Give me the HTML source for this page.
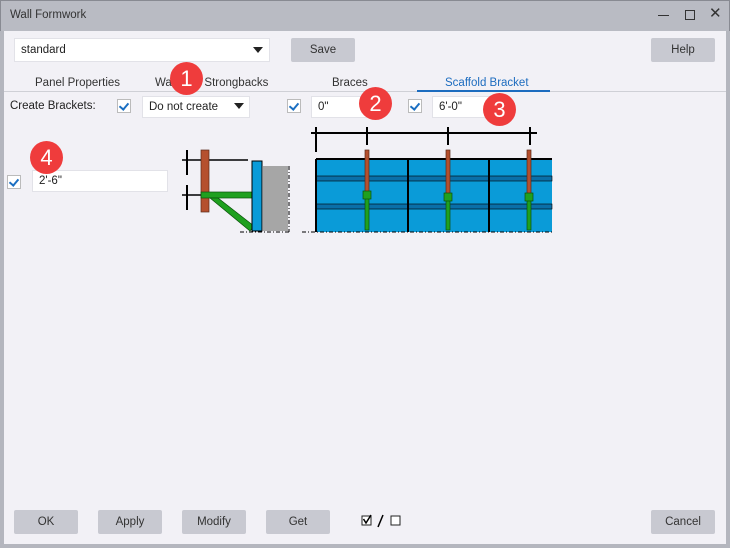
<!DOCTYPE html>
<html><head><style>
*{margin:0;padding:0;box-sizing:border-box}
body{width:730px;height:548px;background:#b4b6be;font-family:"Liberation Sans",sans-serif;font-size:11px;color:#222;position:relative;overflow:hidden}
.a{position:absolute}
#tb{left:0;top:0;width:730px;height:31px;background:#b9bbc3;border:1px solid #888a92;border-bottom:none}
#ct{left:4px;top:31px;width:722px;height:513px;background:#f2f1f6}
.btn{position:absolute;background:#c8c9d1;border-radius:2px;height:24px;text-align:center;line-height:24px;font-size:11.5px;color:#333}
.inp{position:absolute;background:#fff;border:1px solid #e2e2e8;height:22px;line-height:20px;padding-left:6px;font-size:11.5px}
.cb{position:absolute;width:14px;height:14px;background:#fff;border:1px solid #bbb}
.cb:after{content:"";position:absolute;left:3px;top:1px;width:4px;height:7px;border:solid #1b6fc2;border-width:0 2px 2px 0;transform:rotate(40deg)}
.tab{position:absolute;top:77px;font-size:11.5px;color:#333}
.num{position:absolute;width:33px;height:33px;border-radius:50%;background:#ef3c3c;color:#fff;font-size:22px;text-align:center;line-height:33px}
.tri{position:absolute;width:0;height:0;border-left:5px solid transparent;border-right:5px solid transparent;border-top:6px solid #222}
</style></head><body>
<div id="tb" class="a"></div>
<div class="a" style="left:10px;top:9px;font-size:11.5px;color:#333">Wall Formwork</div>
<div class="a" style="left:658px;top:15px;width:11px;height:1px;background:#333"></div>
<div class="a" style="left:685px;top:10px;width:10px;height:10px;border:1px solid #333"></div>
<div class="a" style="left:709px;top:4px;font-size:15px;color:#333">✕</div>
<div id="ct" class="a"></div>
<div class="inp" style="left:14px;top:38px;width:256px;height:24px;line-height:22px">standard</div>
<div class="tri" style="left:253px;top:47px"></div>
<div class="btn" style="left:291px;top:38px;width:64px">Save</div>
<div class="btn" style="left:651px;top:38px;width:64px">Help</div>
<div class="tab" style="left:35px">Panel Properties</div>
<div class="tab" style="left:155px">Walers &amp; Strongbacks</div>
<div class="tab" style="left:332px">Braces</div>
<div class="tab" style="left:445px;color:#1c6cbf">Scaffold Bracket</div>
<div class="a" style="left:4px;top:91px;width:722px;height:1px;background:#cfd0d6"></div>
<div class="a" style="left:417px;top:90px;width:133px;height:2px;background:#1c6cbf"></div>
<div class="a" style="left:10px;top:100px;font-size:11.5px">Create Brackets:</div>
<div class="cb" style="left:117px;top:99px"></div>
<div class="inp" style="left:142px;top:96px;width:108px">Do not create</div>
<div class="tri" style="left:234px;top:103px"></div>
<div class="cb" style="left:287px;top:99px"></div>
<div class="inp" style="left:311px;top:96px;width:60px">0"</div>
<div class="cb" style="left:408px;top:99px"></div>
<div class="inp" style="left:432px;top:96px;width:58px">6'-0"</div>
<div class="cb" style="left:7px;top:175px"></div>
<div class="inp" style="left:32px;top:170px;width:136px">2'-6"</div>
<svg class="a" style="left:0;top:0" width="730" height="548">
<g stroke="#000" fill="none">
<line x1="182" y1="160" x2="248" y2="160" stroke-width="1.5"/>
<line x1="187" y1="150" x2="187" y2="175" stroke-width="2"/>
<line x1="182" y1="195" x2="252" y2="195" stroke-width="1.5"/>
<line x1="187" y1="185" x2="187" y2="210" stroke-width="2"/>
</g>
<rect x="201" y="150" width="8" height="62" fill="#b5502e" stroke="#5a2a18" stroke-width="0.7"/>
<rect x="201" y="192" width="52" height="6" fill="#1fa01f" stroke="#0a500a" stroke-width="0.7"/>
<polygon points="210,198 218,198 254,226 250,231" fill="#1fa01f" stroke="#0a500a" stroke-width="0.7"/>
<rect x="252" y="161" width="10" height="70" fill="#0a9bd8" stroke="#000"/>
<rect x="263" y="166" width="25" height="65" fill="#a6a6a6"/>
<line x1="289" y1="166" x2="289" y2="232" stroke="#000" stroke-dasharray="4,2,1,2"/>
<line x1="240" y1="232" x2="290" y2="232" stroke="#000" stroke-dasharray="4,2,1,2"/>
<line x1="311" y1="133" x2="537" y2="133" stroke="#000" stroke-width="2"/>
<g stroke="#000" stroke-width="2">
<line x1="316" y1="127" x2="316" y2="152"/><line x1="367" y1="127" x2="367" y2="145"/>
<line x1="448" y1="127" x2="448" y2="145"/><line x1="530" y1="127" x2="530" y2="145"/>
</g>
<rect x="316" y="159" width="236" height="73" fill="#0a9bd8"/>
<rect x="316" y="176" width="236" height="5" fill="#0a6fa8" stroke="#000" stroke-width="0.6"/>
<rect x="316" y="204" width="236" height="5" fill="#0a6fa8" stroke="#000" stroke-width="0.6"/>
<line x1="316" y1="159" x2="552" y2="159" stroke="#000" stroke-width="2"/>
<g stroke="#000" stroke-width="2"><line x1="316" y1="159" x2="316" y2="232"/><line x1="408" y1="159" x2="408" y2="232"/><line x1="489" y1="159" x2="489" y2="232"/></g>
<line x1="302" y1="232" x2="552" y2="232" stroke="#000" stroke-dasharray="4,2,1,2"/>
<g stroke-width="0.7">
<rect x="365" y="150" width="4" height="45" fill="#b5502e" stroke="#5a2a18"/><rect x="365" y="195" width="4" height="35" fill="#1fa01f" stroke="#0a500a"/><rect x="363" y="191" width="8" height="8" fill="#1fa01f" stroke="#0a500a"/>
<rect x="446" y="150" width="4" height="46" fill="#b5502e" stroke="#5a2a18"/><rect x="446" y="196" width="4" height="34" fill="#1fa01f" stroke="#0a500a"/><rect x="444" y="193" width="8" height="8" fill="#1fa01f" stroke="#0a500a"/>
<rect x="527" y="150" width="4" height="46" fill="#b5502e" stroke="#5a2a18"/><rect x="527" y="196" width="4" height="34" fill="#1fa01f" stroke="#0a500a"/><rect x="525" y="193" width="8" height="8" fill="#1fa01f" stroke="#0a500a"/>
</g>
<rect x="362" y="516" width="9" height="9" fill="#fff" stroke="#222"/>
<path d="M363.5 519 L366 523 L371 515" stroke="#000" stroke-width="1.5" fill="none"/>
<line x1="378" y1="527" x2="383" y2="515" stroke="#000" stroke-width="1.5"/>
<rect x="391" y="516" width="9" height="9" fill="#fff" stroke="#222"/>
</svg>
<div class="num" style="left:170px;top:62px">1</div>
<div class="num" style="left:359px;top:87px">2</div>
<div class="num" style="left:483px;top:93px">3</div>
<div class="num" style="left:30px;top:141px">4</div>
<div class="btn" style="left:14px;top:510px;width:64px">OK</div>
<div class="btn" style="left:98px;top:510px;width:64px">Apply</div>
<div class="btn" style="left:182px;top:510px;width:64px">Modify</div>
<div class="btn" style="left:266px;top:510px;width:64px">Get</div>
<div class="btn" style="left:651px;top:510px;width:64px">Cancel</div>
</body></html>
